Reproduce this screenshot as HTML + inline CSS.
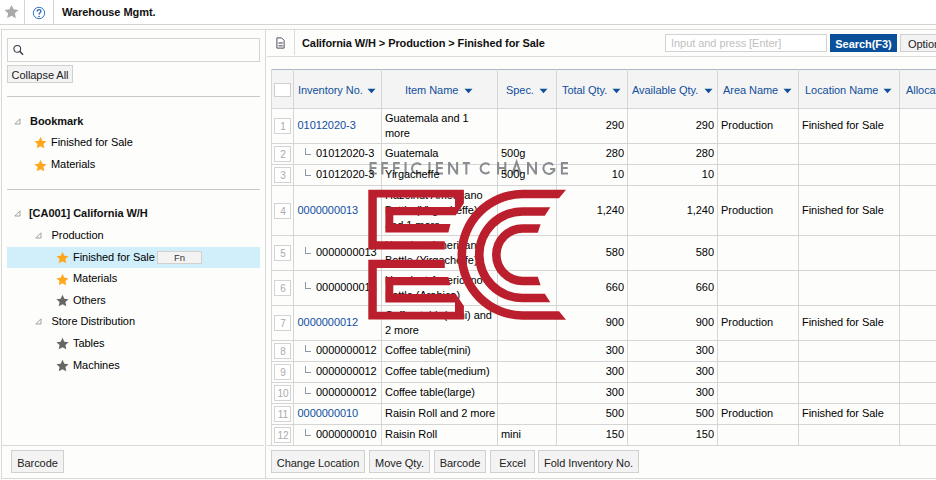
<!DOCTYPE html><html><head><meta charset="utf-8"><style>
html,body{margin:0;padding:0;}
body{width:936px;height:480px;overflow:hidden;position:relative;background:#fdfdfc;font-family:"Liberation Sans",sans-serif;font-size:11px;color:#000;letter-spacing:-0.05px;}
.t{position:absolute;white-space:nowrap;line-height:14px;}
.b{position:absolute;box-sizing:border-box;}
.btn{position:absolute;box-sizing:border-box;background:#f3f3f3;border:1px solid #d0d0d0;text-align:center;color:#222;}
</style></head><body>
<div class="b" style="left:0px;top:0px;width:936px;height:24px;background:#ffffff"></div>
<div class="b" style="left:0px;top:24px;width:936px;height:1px;background:#d4d4d4"></div>
<div class="b" style="left:24px;top:0px;width:1px;height:24px;background:#d4d4d4"></div>
<div class="b" style="left:53px;top:0px;width:1px;height:24px;background:#d4d4d4"></div>
<svg class="b" style="left:4px;top:4.2px" width="15" height="15" viewBox="0 0 12 12"><path d="M6.00 0.70 L7.68 4.29 L11.61 4.78 L8.71 7.48 L9.47 11.37 L6.00 9.45 L2.53 11.37 L3.29 7.48 L0.39 4.78 L4.32 4.29 Z" fill="#aaaaaa"/></svg>
<svg class="b" style="left:32px;top:5.7px" width="14" height="14" viewBox="0 0 14 14"><circle cx="7" cy="7" r="5.7" fill="none" stroke="#3678c8" stroke-width="1"/><path d="M5.1 5.5 Q5.1 3.6 7 3.6 Q8.9 3.6 8.9 5.3 Q8.9 6.4 7.7 7 Q7.1 7.4 7.1 8.6" fill="none" stroke="#2363b3" stroke-width="1.3"/><circle cx="7.1" cy="10.5" r="0.8" fill="#2363b3"/></svg>
<div class="t " style="left:62px;top:5px;color:#111;font-weight:bold;">Warehouse Mgmt.</div>
<div class="b" style="left:1px;top:29px;width:935px;height:1px;background:#d9d9d9"></div>
<div class="b" style="left:1px;top:29px;width:1px;height:450px;background:#d9d9d9"></div>
<div class="b" style="left:265px;top:29px;width:1px;height:450px;background:#d9d9d9"></div>
<div class="b" style="left:1px;top:478px;width:935px;height:1px;background:#d9d9d9"></div>
<div class="b" style="left:7px;top:38px;width:253px;height:24px;border:1px solid #d4d4d4"></div>
<svg class="b" style="left:12px;top:43px" width="13" height="13" viewBox="0 0 13 13"><circle cx="5.25" cy="5.85" r="3.4" fill="none" stroke="#343b4b" stroke-width="1.05"/><path d="M7.6 8.3 L11.1 11.7" stroke="#343b4b" stroke-width="1.5"/></svg>
<div class="btn" style="left:7px;top:65px;width:66px;height:18px;line-height:18px;">Collapse All</div>
<div class="b" style="left:7px;top:96px;width:253px;height:1px;background:#c8c8c8"></div>
<svg class="b" style="left:13.5px;top:117.5px" width="7" height="7" viewBox="0 0 7 7"><path d="M6 0.8 L6 6 L0.8 6 Z" fill="none" stroke="#a0a0a0" stroke-width="1"/></svg>
<div class="t " style="left:30px;top:114px;color:#111;font-weight:bold;">Bookmark</div>
<svg class="b" style="left:33.5px;top:135.8px" width="13" height="13" viewBox="0 0 12 12"><path d="M6.00 0.70 L7.68 4.29 L11.61 4.78 L8.71 7.48 L9.47 11.37 L6.00 9.45 L2.53 11.37 L3.29 7.48 L0.39 4.78 L4.32 4.29 Z" fill="#ffa71a"/></svg>
<div class="t " style="left:51px;top:135px;">Finished for Sale</div>
<svg class="b" style="left:33.5px;top:158.5px" width="13" height="13" viewBox="0 0 12 12"><path d="M6.00 0.70 L7.68 4.29 L11.61 4.78 L8.71 7.48 L9.47 11.37 L6.00 9.45 L2.53 11.37 L3.29 7.48 L0.39 4.78 L4.32 4.29 Z" fill="#ffa71a"/></svg>
<div class="t " style="left:51px;top:157px;">Materials</div>
<div class="b" style="left:7px;top:189px;width:253px;height:1px;background:#c8c8c8"></div>
<svg class="b" style="left:13.5px;top:209.5px" width="7" height="7" viewBox="0 0 7 7"><path d="M6 0.8 L6 6 L0.8 6 Z" fill="none" stroke="#a0a0a0" stroke-width="1"/></svg>
<div class="t " style="left:29px;top:206px;color:#111;font-weight:bold;">[CA001] California W/H</div>
<svg class="b" style="left:34.5px;top:231.5px" width="7" height="7" viewBox="0 0 7 7"><path d="M6 0.8 L6 6 L0.8 6 Z" fill="none" stroke="#a0a0a0" stroke-width="1"/></svg>
<div class="t " style="left:51.5px;top:228px;">Production</div>
<div class="b" style="left:7px;top:247px;width:253px;height:21px;background:#d1effa"></div>
<svg class="b" style="left:55.5px;top:251.1px" width="13" height="13" viewBox="0 0 12 12"><path d="M6.00 0.70 L7.68 4.29 L11.61 4.78 L8.71 7.48 L9.47 11.37 L6.00 9.45 L2.53 11.37 L3.29 7.48 L0.39 4.78 L4.32 4.29 Z" fill="#ffa71a"/></svg>
<div class="t " style="left:73px;top:250px;">Finished for Sale</div>
<div class="btn" style="left:157px;top:251px;width:45px;height:13px;line-height:11px;font-size:9.5px;letter-spacing:0;color:#333;border-color:#d6d0cc;">Fn</div>
<svg class="b" style="left:55.5px;top:272.6px" width="13" height="13" viewBox="0 0 12 12"><path d="M6.00 0.70 L7.68 4.29 L11.61 4.78 L8.71 7.48 L9.47 11.37 L6.00 9.45 L2.53 11.37 L3.29 7.48 L0.39 4.78 L4.32 4.29 Z" fill="#ffa71a"/></svg>
<div class="t " style="left:73px;top:271px;">Materials</div>
<svg class="b" style="left:55.5px;top:294.1px" width="13" height="13" viewBox="0 0 12 12"><path d="M6.00 0.70 L7.68 4.29 L11.61 4.78 L8.71 7.48 L9.47 11.37 L6.00 9.45 L2.53 11.37 L3.29 7.48 L0.39 4.78 L4.32 4.29 Z" fill="#666666"/></svg>
<div class="t " style="left:73px;top:293px;">Others</div>
<svg class="b" style="left:34.5px;top:317.5px" width="7" height="7" viewBox="0 0 7 7"><path d="M6 0.8 L6 6 L0.8 6 Z" fill="none" stroke="#a0a0a0" stroke-width="1"/></svg>
<div class="t " style="left:51.5px;top:314px;">Store Distribution</div>
<svg class="b" style="left:55.5px;top:337.1px" width="13" height="13" viewBox="0 0 12 12"><path d="M6.00 0.70 L7.68 4.29 L11.61 4.78 L8.71 7.48 L9.47 11.37 L6.00 9.45 L2.53 11.37 L3.29 7.48 L0.39 4.78 L4.32 4.29 Z" fill="#666666"/></svg>
<div class="t " style="left:73px;top:336px;">Tables</div>
<svg class="b" style="left:55.5px;top:358.6px" width="13" height="13" viewBox="0 0 12 12"><path d="M6.00 0.70 L7.68 4.29 L11.61 4.78 L8.71 7.48 L9.47 11.37 L6.00 9.45 L2.53 11.37 L3.29 7.48 L0.39 4.78 L4.32 4.29 Z" fill="#666666"/></svg>
<div class="t " style="left:73px;top:358px;">Machines</div>
<div class="b" style="left:1px;top:445px;width:263px;height:1px;background:#d9d9d9"></div>
<div class="b" style="left:267px;top:445px;width:4px;height:1px;background:#d9d9d9"></div>
<div class="btn" style="left:11px;top:450px;width:53px;height:23px;line-height:25px;">Barcode</div>
<svg class="b" style="left:276.3px;top:36.6px" width="9" height="12" viewBox="0 0 9 12"><path d="M0.9 0.9 H5.6 L8.1 3.4 V11.1 H0.9 Z" fill="#fff" stroke="#4d4f60" stroke-width="1"/><rect x="2.5" y="5" width="4.2" height="2" fill="#9a9aa0"/><rect x="2.5" y="8.4" width="4.2" height="0.9" fill="#333"/></svg>
<div class="b" style="left:294px;top:30px;width:1px;height:25px;background:#dcdcdc"></div>
<div class="t " style="left:302px;top:36px;color:#111;font-weight:bold;letter-spacing:-0.09px;">California W/H &gt; Production &gt; Finished for Sale</div>
<div class="b" style="left:665px;top:34px;width:162px;height:18px;background:#fff;border:1px solid #d2d2d2"></div>
<div class="t " style="left:671px;top:36px;color:#c0c0c0;">Input and press [Enter]</div>
<div class="b" style="left:830px;top:34px;width:67px;height:18px;background:#0a4f99;color:#fff;font-weight:bold;text-align:center;line-height:18px;padding-top:1px;box-sizing:border-box;">Search(F3)</div>
<div class="btn" style="left:900px;top:34px;width:60px;height:18px;line-height:16px;text-align:left;padding-left:7px;padding-top:1px;">Option</div>
<div class="b" style="left:267px;top:56px;width:669px;height:1px;background:#dcdcdc"></div>
<div class="b" style="left:271px;top:69px;width:665px;height:39px;background:#f4f4f4"></div>
<div class="b" style="left:271px;top:69px;width:665px;height:1px;background:#a9b7c6"></div>
<div class="b" style="left:271px;top:108px;width:665px;height:1px;background:#d5d5d5"></div>
<div class="b" style="left:271px;top:143px;width:665px;height:1px;background:#d5d5d5"></div>
<div class="b" style="left:271px;top:164px;width:665px;height:1px;background:#d5d5d5"></div>
<div class="b" style="left:271px;top:185px;width:665px;height:1px;background:#d5d5d5"></div>
<div class="b" style="left:271px;top:235px;width:665px;height:1px;background:#d5d5d5"></div>
<div class="b" style="left:271px;top:270px;width:665px;height:1px;background:#d5d5d5"></div>
<div class="b" style="left:271px;top:305px;width:665px;height:1px;background:#d5d5d5"></div>
<div class="b" style="left:271px;top:340px;width:665px;height:1px;background:#d5d5d5"></div>
<div class="b" style="left:271px;top:361px;width:665px;height:1px;background:#d5d5d5"></div>
<div class="b" style="left:271px;top:382px;width:665px;height:1px;background:#d5d5d5"></div>
<div class="b" style="left:271px;top:403px;width:665px;height:1px;background:#d5d5d5"></div>
<div class="b" style="left:271px;top:424px;width:665px;height:1px;background:#d5d5d5"></div>
<div class="b" style="left:271px;top:445px;width:665px;height:1px;background:#d5d5d5"></div>
<div class="b" style="left:271px;top:69px;width:1px;height:376px;background:#d5d5d5"></div>
<div class="b" style="left:293px;top:69px;width:1px;height:376px;background:#d5d5d5"></div>
<div class="b" style="left:381px;top:69px;width:1px;height:376px;background:#d5d5d5"></div>
<div class="b" style="left:497px;top:69px;width:1px;height:376px;background:#d5d5d5"></div>
<div class="b" style="left:556px;top:69px;width:1px;height:376px;background:#d5d5d5"></div>
<div class="b" style="left:627px;top:69px;width:1px;height:376px;background:#d5d5d5"></div>
<div class="b" style="left:717px;top:69px;width:1px;height:376px;background:#d5d5d5"></div>
<div class="b" style="left:798px;top:69px;width:1px;height:376px;background:#d5d5d5"></div>
<div class="b" style="left:899px;top:69px;width:1px;height:376px;background:#d5d5d5"></div>
<svg class="b" style="left:0;top:0" width="936" height="480" viewBox="0 0 936 480"><path d="M369.6 163.0 H376.7 M370.6 162.0 V174.4 M369.6 168.1 H376.4 M369.6 173.4 H376.7 M381.4 163.0 H388.0 M382.4 162.0 V174.4 M381.4 168.1 H387.7 M393.1 163.0 H399.8 M394.1 162.0 V174.4 M393.1 168.1 H399.5 M405.55 162.0 V174.4 M421.06 164.92 A5.20 5.20 0 1 0 421.06 171.88 M429.45 162.0 V174.4 M435.9 163.0 H443.0 M436.9 162.0 V174.4 M435.9 168.1 H442.7 M435.9 173.4 H443.0 M449.1 174.4 V162.0 M449.1 162.3 L457.1 174.1 M457.1 174.4 V162.0 M462.8 163.0 H469.9 M466.35 163.0 V174.4 M489.40 165.02 A5.05 5.05 0 1 0 489.40 171.78 M498.1 162.0 V174.4 M505.3 162.0 V174.4 M498.1 168.1 H505.3 M512.2 174.4 L516.6 161.8 L521.0 174.4 M514.0 170.6 H519.1999999999999 M528.0 174.4 V162.0 M528.0 162.3 L536.0 174.1 M536.0 174.4 V162.0 M553.14 165.04 A5.45 5.45 0 1 0 554.25 169.16 M550.05 168.9 H555.3 M554.30 168.1 V171.5 M560.9 163.0 H568.0 M561.9 162.0 V174.4 M560.9 168.1 H567.7 M560.9 173.4 H568.0 " fill="none" stroke="rgba(124,127,133,0.9)" stroke-width="2.0"/></svg>
<div class="b" style="left:274px;top:83px;width:17px;height:14px;background:#fff;border:1px solid #cfcfcf"></div>
<div class="t " style="left:298px;top:83px;color:#124f9c;">Inventory No.</div>
<svg class="b" style="left:367px;top:88px" width="9" height="6" viewBox="0 0 9 6"><path d="M0.5 0.8 H8.5 L4.5 5.2 Z" fill="#124f9c"/></svg>
<div class="t " style="left:405px;top:83px;color:#124f9c;">Item Name</div>
<svg class="b" style="left:463.5px;top:88px" width="9" height="6" viewBox="0 0 9 6"><path d="M0.5 0.8 H8.5 L4.5 5.2 Z" fill="#124f9c"/></svg>
<div class="t " style="left:506px;top:83px;color:#124f9c;">Spec.</div>
<svg class="b" style="left:539px;top:88px" width="9" height="6" viewBox="0 0 9 6"><path d="M0.5 0.8 H8.5 L4.5 5.2 Z" fill="#124f9c"/></svg>
<div class="t " style="left:562px;top:83px;color:#124f9c;">Total Qty.</div>
<svg class="b" style="left:612px;top:88px" width="9" height="6" viewBox="0 0 9 6"><path d="M0.5 0.8 H8.5 L4.5 5.2 Z" fill="#124f9c"/></svg>
<div class="t " style="left:632px;top:83px;color:#124f9c;">Available Qty.</div>
<svg class="b" style="left:703.5px;top:88px" width="9" height="6" viewBox="0 0 9 6"><path d="M0.5 0.8 H8.5 L4.5 5.2 Z" fill="#124f9c"/></svg>
<div class="t " style="left:723px;top:83px;color:#124f9c;">Area Name</div>
<svg class="b" style="left:783px;top:88px" width="9" height="6" viewBox="0 0 9 6"><path d="M0.5 0.8 H8.5 L4.5 5.2 Z" fill="#124f9c"/></svg>
<div class="t " style="left:805px;top:83px;color:#124f9c;">Location Name</div>
<svg class="b" style="left:883px;top:88px" width="9" height="6" viewBox="0 0 9 6"><path d="M0.5 0.8 H8.5 L4.5 5.2 Z" fill="#124f9c"/></svg>
<div class="t " style="left:906px;top:83px;color:#124f9c;">Allocated</div>
<div class="b" style="left:274px;top:118.00px;width:17px;height:16px;border:1px solid #d3d3d3;background:#fff;color:#aaa;font-size:10px;letter-spacing:0;text-align:center;line-height:15px;padding-left:1px;">1</div>
<div class="t " style="left:297.5px;top:118px;color:#10509f;">01012020-3</div>
<div class="t " style="left:385px;top:111px;">Guatemala and 1</div>
<div class="t " style="left:385px;top:126px;">more</div>
<div class="t" style="right:312px;top:118px;text-align:right;">290</div>
<div class="t" style="right:222px;top:118px;text-align:right;">290</div>
<div class="t " style="left:721px;top:118px;">Production</div>
<div class="t " style="left:802px;top:118px;">Finished for Sale</div>
<div class="b" style="left:274px;top:146.00px;width:17px;height:16px;border:1px solid #d3d3d3;background:#fff;color:#aaa;font-size:10px;letter-spacing:0;text-align:center;line-height:15px;padding-left:1px;">2</div>
<div class="b" style="left:305px;top:147.5px;width:6px;height:7px;border-left:1px solid #8d99a6;border-bottom:1px solid #8d99a6"></div>
<div class="t " style="left:316px;top:146px;">01012020-3</div>
<div class="t " style="left:385px;top:146px;">Guatemala</div>
<div class="t " style="left:501px;top:146px;">500g</div>
<div class="t" style="right:312px;top:146px;text-align:right;">280</div>
<div class="t" style="right:222px;top:146px;text-align:right;">280</div>
<div class="b" style="left:274px;top:167.00px;width:17px;height:16px;border:1px solid #d3d3d3;background:#fff;color:#aaa;font-size:10px;letter-spacing:0;text-align:center;line-height:15px;padding-left:1px;">3</div>
<div class="b" style="left:305px;top:168.5px;width:6px;height:7px;border-left:1px solid #8d99a6;border-bottom:1px solid #8d99a6"></div>
<div class="t " style="left:316px;top:167px;">01012020-3</div>
<div class="t " style="left:385px;top:167px;">Yirgacheffe</div>
<div class="t " style="left:501px;top:167px;">500g</div>
<div class="t" style="right:312px;top:167px;text-align:right;">10</div>
<div class="t" style="right:222px;top:167px;text-align:right;">10</div>
<div class="b" style="left:274px;top:202.50px;width:17px;height:16px;border:1px solid #d3d3d3;background:#fff;color:#aaa;font-size:10px;letter-spacing:0;text-align:center;line-height:15px;padding-left:1px;">4</div>
<div class="t " style="left:297.5px;top:203px;color:#10509f;">0000000013</div>
<div class="t " style="left:385px;top:188px;">Hazelnut Americano</div>
<div class="t " style="left:385px;top:203px;">Bottle (Yirgacheffe)</div>
<div class="t " style="left:385px;top:218px;">and 1 more</div>
<div class="t" style="right:312px;top:203px;text-align:right;">1,240</div>
<div class="t" style="right:222px;top:203px;text-align:right;">1,240</div>
<div class="t " style="left:721px;top:203px;">Production</div>
<div class="t " style="left:802px;top:203px;">Finished for Sale</div>
<div class="b" style="left:274px;top:245.00px;width:17px;height:16px;border:1px solid #d3d3d3;background:#fff;color:#aaa;font-size:10px;letter-spacing:0;text-align:center;line-height:15px;padding-left:1px;">5</div>
<div class="b" style="left:305px;top:246.5px;width:6px;height:7px;border-left:1px solid #8d99a6;border-bottom:1px solid #8d99a6"></div>
<div class="t " style="left:316px;top:245px;">0000000013</div>
<div class="t " style="left:385px;top:238px;">Hazelnut Americano</div>
<div class="t " style="left:385px;top:253px;">Bottle (Yirgacheffe)</div>
<div class="t" style="right:312px;top:245px;text-align:right;">580</div>
<div class="t" style="right:222px;top:245px;text-align:right;">580</div>
<div class="b" style="left:274px;top:280.00px;width:17px;height:16px;border:1px solid #d3d3d3;background:#fff;color:#aaa;font-size:10px;letter-spacing:0;text-align:center;line-height:15px;padding-left:1px;">6</div>
<div class="b" style="left:305px;top:281.5px;width:6px;height:7px;border-left:1px solid #8d99a6;border-bottom:1px solid #8d99a6"></div>
<div class="t " style="left:316px;top:280px;">0000000013</div>
<div class="t " style="left:385px;top:273px;">Hazelnut Americano</div>
<div class="t " style="left:385px;top:288px;">Bottle (Arabica)</div>
<div class="t" style="right:312px;top:280px;text-align:right;">660</div>
<div class="t" style="right:222px;top:280px;text-align:right;">660</div>
<div class="b" style="left:274px;top:315.00px;width:17px;height:16px;border:1px solid #d3d3d3;background:#fff;color:#aaa;font-size:10px;letter-spacing:0;text-align:center;line-height:15px;padding-left:1px;">7</div>
<div class="t " style="left:297.5px;top:315px;color:#10509f;">0000000012</div>
<div class="t " style="left:385px;top:308px;">Coffee table(mini) and</div>
<div class="t " style="left:385px;top:323px;">2 more</div>
<div class="t" style="right:312px;top:315px;text-align:right;">900</div>
<div class="t" style="right:222px;top:315px;text-align:right;">900</div>
<div class="t " style="left:721px;top:315px;">Production</div>
<div class="t " style="left:802px;top:315px;">Finished for Sale</div>
<div class="b" style="left:274px;top:343.00px;width:17px;height:16px;border:1px solid #d3d3d3;background:#fff;color:#aaa;font-size:10px;letter-spacing:0;text-align:center;line-height:15px;padding-left:1px;">8</div>
<div class="b" style="left:305px;top:344.5px;width:6px;height:7px;border-left:1px solid #8d99a6;border-bottom:1px solid #8d99a6"></div>
<div class="t " style="left:316px;top:343px;">0000000012</div>
<div class="t " style="left:385px;top:343px;">Coffee table(mini)</div>
<div class="t" style="right:312px;top:343px;text-align:right;">300</div>
<div class="t" style="right:222px;top:343px;text-align:right;">300</div>
<div class="b" style="left:274px;top:364.00px;width:17px;height:16px;border:1px solid #d3d3d3;background:#fff;color:#aaa;font-size:10px;letter-spacing:0;text-align:center;line-height:15px;padding-left:1px;">9</div>
<div class="b" style="left:305px;top:365.5px;width:6px;height:7px;border-left:1px solid #8d99a6;border-bottom:1px solid #8d99a6"></div>
<div class="t " style="left:316px;top:364px;">0000000012</div>
<div class="t " style="left:385px;top:364px;">Coffee table(medium)</div>
<div class="t" style="right:312px;top:364px;text-align:right;">300</div>
<div class="t" style="right:222px;top:364px;text-align:right;">300</div>
<div class="b" style="left:274px;top:385.00px;width:17px;height:16px;border:1px solid #d3d3d3;background:#fff;color:#aaa;font-size:10px;letter-spacing:0;text-align:center;line-height:15px;padding-left:1px;">10</div>
<div class="b" style="left:305px;top:386.5px;width:6px;height:7px;border-left:1px solid #8d99a6;border-bottom:1px solid #8d99a6"></div>
<div class="t " style="left:316px;top:385px;">0000000012</div>
<div class="t " style="left:385px;top:385px;">Coffee table(large)</div>
<div class="t" style="right:312px;top:385px;text-align:right;">300</div>
<div class="t" style="right:222px;top:385px;text-align:right;">300</div>
<div class="b" style="left:274px;top:406.00px;width:17px;height:16px;border:1px solid #d3d3d3;background:#fff;color:#aaa;font-size:10px;letter-spacing:0;text-align:center;line-height:15px;padding-left:1px;">11</div>
<div class="t " style="left:297.5px;top:406px;color:#10509f;">0000000010</div>
<div class="t " style="left:385px;top:406px;">Raisin Roll and 2 more</div>
<div class="t" style="right:312px;top:406px;text-align:right;">500</div>
<div class="t" style="right:222px;top:406px;text-align:right;">500</div>
<div class="t " style="left:721px;top:406px;">Production</div>
<div class="t " style="left:802px;top:406px;">Finished for Sale</div>
<div class="b" style="left:274px;top:427.00px;width:17px;height:16px;border:1px solid #d3d3d3;background:#fff;color:#aaa;font-size:10px;letter-spacing:0;text-align:center;line-height:15px;padding-left:1px;">12</div>
<div class="b" style="left:305px;top:428.5px;width:6px;height:7px;border-left:1px solid #8d99a6;border-bottom:1px solid #8d99a6"></div>
<div class="t " style="left:316px;top:427px;">0000000010</div>
<div class="t " style="left:385px;top:427px;">Raisin Roll</div>
<div class="t " style="left:501px;top:427px;">mini</div>
<div class="t" style="right:312px;top:427px;text-align:right;">150</div>
<div class="t" style="right:222px;top:427px;text-align:right;">150</div>
<div class="btn" style="left:271px;top:450px;width:94px;height:23px;line-height:25px;">Change Location</div>
<div class="btn" style="left:369px;top:450px;width:61px;height:23px;line-height:25px;">Move Qty.</div>
<div class="btn" style="left:434px;top:450px;width:52px;height:23px;line-height:25px;">Barcode</div>
<div class="btn" style="left:490px;top:450px;width:45px;height:23px;line-height:25px;">Excel</div>
<div class="btn" style="left:538px;top:450px;width:101px;height:23px;line-height:25px;">Fold Inventory No.</div>
<svg class="b" style="left:0;top:0" width="936" height="480" viewBox="0 0 936 480"><path d="M368.3 189.7 H463.9 V197.5 H368.3 Z M455 189.7 L463.9 189.7 L463.9 203.3 L455.7 215.2 L455 215.2 Z M385.4 206.9 H456 V215.2 H385.4 Z M385.4 206.9 H393.3 V232.4 H385.4 Z M385.4 224 L450.5 224 L448.4 232.4 L385.4 232.4 Z M368.3 189.7 H376.8 V249.6 H368.3 Z M368.3 241.2 H444.8 V249.6 H368.3 Z " fill="#bb1f2d"/><g transform="translate(0,509.3) scale(1,-1)"><path d="M368.3 189.7 H463.9 V197.5 H368.3 Z M455 189.7 L463.9 189.7 L463.9 203.3 L455.7 215.2 L455 215.2 Z M385.4 206.9 H456 V215.2 H385.4 Z M385.4 206.9 H393.3 V232.4 H385.4 Z M385.4 224 L450.5 224 L448.4 232.4 L385.4 232.4 Z M368.3 189.7 H376.8 V249.6 H368.3 Z M368.3 241.2 H444.8 V249.6 H368.3 Z " fill="#bb1f2d"/></g><path d="M522.5 189.75 H566 L559 198.35 H522.5 A56.4 56.4 0 0 0 522.5 311.15 H559 L566 319.75 H522.5 A65.0 65.0 0 0 1 522.5 189.75 Z M522.5 207.15 H550.3 L544.8 215.75 H522.5 A39 39 0 0 0 522.5 293.75 H544.8 L550.3 302.35 H522.5 A47.6 47.6 0 0 1 522.5 207.15 Z M522.5 224.25 H540.6 L537.8 232.85 H522.5 A21.9 21.9 0 0 0 522.5 276.65 H537.8 L540.6 285.25 H522.5 A30.5 30.5 0 0 1 522.5 224.25 Z " fill="#bb1f2d"/></svg>
</body></html>
